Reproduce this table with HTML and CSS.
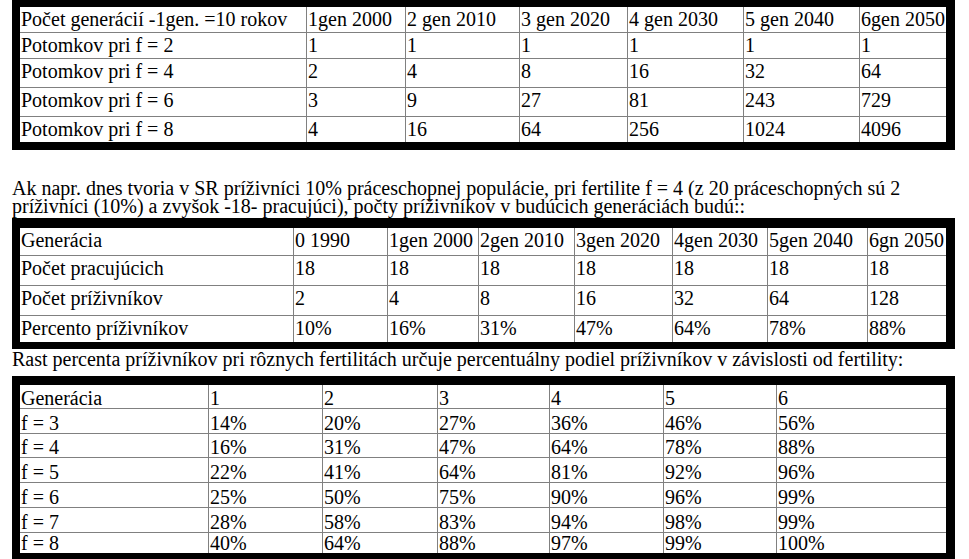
FILE: index.html
```html
<!DOCTYPE html>
<html lang="sk">
<head>
<meta charset="utf-8">
<title>Príživníci</title>
<link rel="stylesheet" href="styles.css">
</head>
<body>
<table class="grid t1">
  <colgroup>
    <col class="w286"><col class="w99"><col class="w114"><col class="w108"><col class="w116"><col class="w116"><col class="w87">
  </colgroup>
  <tr class="h25"><td>Počet generácií -1gen. =10 rokov</td><td>1gen 2000</td><td>2 gen 2010</td><td>3 gen 2020</td><td>4 gen 2030</td><td>5 gen 2040</td><td>6gen 2050</td></tr>
  <tr class="h26"><td>Potomkov pri f = 2</td><td>1</td><td>1</td><td>1</td><td>1</td><td>1</td><td>1</td></tr>
  <tr class="h29"><td>Potomkov pri f = 4</td><td>2</td><td>4</td><td>8</td><td>16</td><td>32</td><td>64</td></tr>
  <tr class="h29"><td>Potomkov pri f = 6</td><td>3</td><td>9</td><td>27</td><td>81</td><td>243</td><td>729</td></tr>
  <tr class="h26"><td>Potomkov pri f = 8</td><td>4</td><td>16</td><td>64</td><td>256</td><td>1024</td><td>4096</td></tr>
</table>

<p class="intro">Ak napr. dnes tvoria v SR príživníci 10% práceschopnej populácie, pri fertilite f = 4 (z 20 práceschopných sú 2<br>príživníci (10%) a zvyšok -18- pracujúci), počty príživníkov v budúcich generáciách budú::</p>

<table class="grid t2">
  <colgroup>
    <col class="w273"><col class="w94"><col class="w91"><col class="w96"><col class="w98"><col class="w95"><col class="w100"><col class="w79">
  </colgroup>
  <tr class="h27"><td>Generácia</td><td>0 1990</td><td>1gen 2000</td><td>2gen 2010</td><td>3gen 2020</td><td>4gen 2030</td><td>5gen 2040</td><td>6gn 2050</td></tr>
  <tr class="h30"><td>Počet pracujúcich</td><td>18</td><td>18</td><td>18</td><td>18</td><td>18</td><td>18</td><td>18</td></tr>
  <tr class="h30"><td>Počet príživníkov</td><td>2</td><td>4</td><td>8</td><td>16</td><td>32</td><td>64</td><td>128</td></tr>
  <tr class="h27"><td>Percento príživníkov</td><td>10%</td><td>16%</td><td>31%</td><td>47%</td><td>64%</td><td>78%</td><td>88%</td></tr>
</table>

<p class="lead">Rast percenta príživníkov pri rôznych fertilitách určuje percentuálny podiel príživníkov v závislosti od fertility:</p>

<table class="grid t3">
  <colgroup>
    <col class="w188"><col class="w114"><col class="w115"><col class="w112"><col class="w114"><col class="w113"><col class="w170">
  </colgroup>
  <tr class="h23"><td>Generácia</td><td>1</td><td>2</td><td>3</td><td>4</td><td>5</td><td>6</td></tr>
  <tr class="h25"><td>f = 3</td><td>14%</td><td>20%</td><td>27%</td><td>36%</td><td>46%</td><td>56%</td></tr>
  <tr class="h24"><td>f = 4</td><td>16%</td><td>31%</td><td>47%</td><td>64%</td><td>78%</td><td>88%</td></tr>
  <tr class="h25"><td>f = 5</td><td>22%</td><td>41%</td><td>64%</td><td>81%</td><td>92%</td><td>96%</td></tr>
  <tr class="h25"><td>f = 6</td><td>25%</td><td>50%</td><td>75%</td><td>90%</td><td>96%</td><td>99%</td></tr>
  <tr class="h25"><td>f = 7</td><td>28%</td><td>58%</td><td>83%</td><td>94%</td><td>98%</td><td>99%</td></tr>
  <tr class="h21"><td>f = 8</td><td>40%</td><td>64%</td><td>88%</td><td>97%</td><td>99%</td><td>100%</td></tr>
</table>
</body>
</html>
```

FILE: styles.css
```css
html, body {
  margin: 0;
  padding: 0;
  background: #fff;
}

body {
  font-family: "Liberation Serif", "Times New Roman", Tinos, "DejaVu Serif", serif;
  font-size: 20px;
  color: #000;
  overflow: hidden;
}

.grid {
  border-collapse: separate;
  border-spacing: 0;
  table-layout: fixed;
  width: 943px;
  margin-left: 12px;
  border: 8px solid #000;
  border-right-width: 9px;
}

.grid td {
  box-sizing: border-box;
  border-left: 1px solid #808080;
  border-top: 1px solid #808080;
  padding: 2px 0 0 1px;
  line-height: 20px;
  vertical-align: top;
  white-space: nowrap;
  overflow: hidden;
}

.grid td:first-child { border-left: 0; }
.grid tr:first-child td { border-top: 0; }

.t1 { margin-top: -1px; }

.intro {
  margin: 29px 0 0 12px;
  line-height: 18px;
  white-space: nowrap;
}

.t2 {
  margin-top: 3px;
  border-top-width: 10px;
  border-bottom-width: 7px;
}

.lead {
  margin: 0 0 0 12px;
  line-height: 20px;
  white-space: nowrap;
}

.t3 {
  margin-top: 7px;
  border-top-width: 9px;
}

.t3 td {
  padding: 0 0 0 1px;
  vertical-align: bottom;
}

/* row heights */
.h21 { height: 21px; }
.h23 { height: 23px; }
.h24 { height: 24px; }
.h25 { height: 25px; }
.h26 { height: 26px; }
.h27 { height: 27px; }
.h29 { height: 29px; }
.h30 { height: 30px; }

/* column widths */
.w79 { width: 79px; }
.w87 { width: 87px; }
.w91 { width: 91px; }
.w94 { width: 94px; }
.w95 { width: 95px; }
.w96 { width: 96px; }
.w98 { width: 98px; }
.w99 { width: 99px; }
.w100 { width: 100px; }
.w108 { width: 108px; }
.w112 { width: 112px; }
.w113 { width: 113px; }
.w114 { width: 114px; }
.w115 { width: 115px; }
.w116 { width: 116px; }
.w170 { width: 170px; }
.w188 { width: 188px; }
.w273 { width: 273px; }
.w286 { width: 286px; }
```
